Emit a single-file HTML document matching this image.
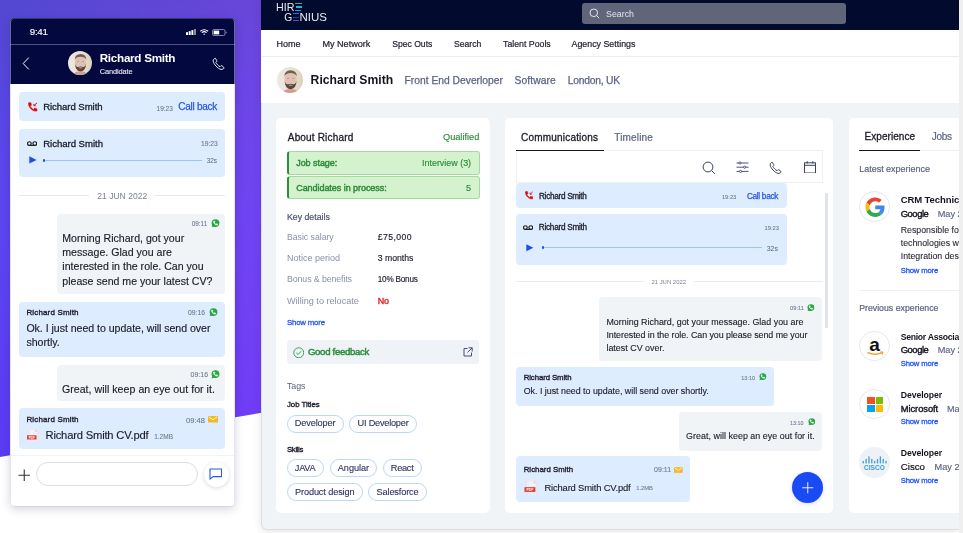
<!DOCTYPE html>
<html><head><meta charset="utf-8"><style>
html,body{margin:0;padding:0;}
body{width:963px;height:533px;position:relative;overflow:hidden;background:#fff;font-family:"Liberation Sans",sans-serif;}
.t{position:absolute;white-space:nowrap;}
.b{position:absolute;}
.av{border-radius:50%;overflow:hidden;background:radial-gradient(ellipse 38% 44% at 50% 50%, #c99a7e 0%, #b98a70 60%, transparent 62%),radial-gradient(ellipse 30% 20% at 50% 78%, #3a2a22 0%, #3a2a22 60%, transparent 64%),linear-gradient(180deg,#efe6dc,#e8dccd);}
</style></head><body>
<div class="b" style="left:0;top:0;width:963px;height:533px;background:linear-gradient(90deg,rgba(200,60,255,0) 0px,rgba(200,60,255,0.18) 250px,rgba(200,60,255,0.25) 963px),linear-gradient(180deg,#5248d0 0px,#5a47e6 120px,#5c46f0 215px,#5c3cf5 435px,#5c3af6 533px);clip-path:polygon(0 0,963px 0,963px 294px,0 457px);"></div>
<div class="b" style="left:10.00px;top:18.00px;width:224.60px;height:488.30px;background:#fff;border-radius:4px;box-shadow:0 3px 10px rgba(20,20,60,0.18);"></div>
<div class="b" style="left:10.00px;top:18.00px;width:224.60px;height:66.20px;background:#03083f;border-radius:4px 4px 0 0;"></div>
<div class="b" style="left:10.00px;top:44.20px;width:224.60px;height:1.00px;background:#4d5280;"></div>
<svg class="b" style="left:186.00px;top:29.00px;" width="10.00" height="6.00" viewBox="0 0 10.00 6.00"><rect x="0" y="3.2" width="2" height="2.8" fill="#fff"/><rect x="2.7" y="2.2" width="2" height="3.8" fill="#fff"/><rect x="5.4" y="1.1" width="2" height="4.9" fill="#fff"/><rect x="8.1" y="0" width="1.9" height="6" fill="#fff" opacity="0.55"/></svg>
<svg class="b" style="left:200.00px;top:29.00px;" width="8.50" height="6.20" viewBox="0 0 8.50 6.20"><path d="M0.3 2.2 Q4.2 -0.8 8.1 2.2" stroke="#fff" stroke-width="1.1" fill="none"/><path d="M1.8 3.6 Q4.2 1.7 6.6 3.6" stroke="#fff" stroke-width="1.1" fill="none"/><path d="M3.2 5 L4.2 6 L5.2 5 Q4.2 4.2 3.2 5Z" fill="#fff"/></svg>
<svg class="b" style="left:211.50px;top:28.50px;" width="15.50" height="7.00" viewBox="0 0 15.50 7.00"><rect x="0.5" y="0.5" width="12.5" height="6" rx="1.5" stroke="#8c8fb0" stroke-width="0.9" fill="none"/><rect x="1.6" y="1.6" width="5.6" height="3.8" fill="#fff"/><path d="M13.8 2.3 L15 3.5 L13.8 4.7Z" fill="#8c8fb0"/></svg>
<svg class="b" style="left:22.00px;top:57.00px;" width="9.00" height="13.00" viewBox="0 0 9.00 13.00"><path d="M6.8 0.6 L1.2 6.5 L6.8 12.4" stroke="#fff" stroke-width="1" fill="none"/></svg>
<svg class="b" style="left:68.30px;top:51.30px" width="24" height="24" viewBox="0 0 26 26"><defs><clipPath id="avc8"><circle cx="13" cy="13" r="13"/></clipPath><filter id="avf8" x="-10%" y="-10%" width="120%" height="120%"><feGaussianBlur stdDeviation="0.45"/></filter><linearGradient id="avg8" x1="0" y1="0" x2="1" y2="0"><stop offset="0" stop-color="#ede9e1"/><stop offset="0.6" stop-color="#e7e2d7"/><stop offset="1" stop-color="#dcd0b8"/></linearGradient></defs><g clip-path="url(#avc8)"><rect width="26" height="26" fill="url(#avg8)"/><g filter="url(#avf8)"><ellipse cx="13.6" cy="12.8" rx="6.2" ry="8.2" fill="#dfc2b2"/><path d="M7.3 9.5 Q7.5 3.6 13.6 3.3 Q19.7 3.6 19.9 9.5 Q18.5 6.2 13.6 6.1 Q8.7 6.2 7.3 9.5Z" fill="#6e5e52"/><path d="M7.6 13.5 Q7.9 21.8 13.6 22.4 Q19.3 21.8 19.6 13.5 Q18.8 17.6 16.2 17.2 Q13.6 16.4 11 17.2 Q8.4 17.6 7.6 13.5Z" fill="#5a4a42"/><ellipse cx="13.6" cy="18.2" rx="2" ry="0.75" fill="#c08878"/><path d="M10 11.4 H11.8 M15.4 11.4 H17.2" stroke="#9a7a6c" stroke-width="0.6"/><path d="M6 26 Q7 22.5 11 22.2 L16 22.2 Q20 22.5 21 26Z" fill="#d49d8f"/></g></g></svg>
<svg class="b" style="left:211.50px;top:56.50px;" width="13.50" height="13.50" viewBox="0 0 13.50 13.50"><path d="M3.2 1.2 C2.2 1.6 1 2.6 1.2 4.2 C1.6 7 5.6 11.6 9 12.4 C10.4 12.7 11.6 11.7 12.2 10.8 L10 8.8 C9.6 8.5 9.1 8.6 8.8 8.9 L8 9.7 C6.4 8.9 4.6 7 3.8 5.4 L4.6 4.6 C4.9 4.3 5 3.8 4.7 3.4 Z" stroke="#fff" stroke-width="0.9" fill="none" stroke-linejoin="round"/></svg>
<div class="b" style="left:19.40px;top:92.30px;width:205.60px;height:29.20px;background:#ddecfe;border-radius:4px;"></div>
<svg class="b" style="left:27.50px;top:102.00px;" width="10.00" height="10.00" viewBox="0 0 10.00 10.00"><g transform="translate(-0.9 -0.7) scale(0.4667)"><path fill="#e00b0b" stroke="#e00b0b" stroke-width="1.4" d="M6.62 10.79c1.44 2.83 3.76 5.14 6.59 6.59l2.2-2.2c.27-.27.67-.36 1.02-.24 1.12.37 2.33.57 3.57.57.55 0 1 .45 1 1V20c0 .55-.45 1-1 1-9.39 0-17-7.61-17-17 0-.55.45-1 1-1h3.5c.55 0 1 .45 1 1 0 1.25.2 2.45.57 3.57.11.35.03.74-.25 1.02l-2.2 2.2z"/></g><path d="M9 0.9 L6 3.6 M5.9 1.9 V3.7 H7.7" stroke="#e00b0b" stroke-width="1" fill="none"/></svg>
<div class="b" style="left:19.20px;top:129.10px;width:206.00px;height:47.60px;background:#ddecfe;border-radius:4px;"></div>
<svg class="b" style="left:27.00px;top:141.00px;" width="10.20" height="5.40" viewBox="0 0 10.20 5.40"><circle cx="2.4" cy="2.6" r="1.85" stroke="#222" stroke-width="1.2" fill="none"/><circle cx="7.8" cy="2.6" r="1.85" stroke="#222" stroke-width="1.2" fill="none"/><path d="M2.4 4.45 H7.8" stroke="#222" stroke-width="1.1"/></svg>
<svg class="b" style="left:28.50px;top:156.30px;" width="8.00" height="7.90" viewBox="0 0 8.00 7.90"><path d="M0.3 0.3 L7.6 3.95 L0.3 7.6Z" fill="#1d4fe8"/></svg>
<div class="b" style="left:43.00px;top:160.00px;width:158.90px;height:1.00px;background:#9cc2f6;"></div>
<div class="b" style="left:42.60px;top:159.20px;width:2.60px;height:2.60px;background:#1d4fe8;border-radius:50%;"></div>
<div class="b" style="left:19.20px;top:194.60px;width:70.30px;height:1.00px;background:#e6e9ee;"></div>
<div class="b" style="left:154.70px;top:194.60px;width:70.50px;height:1.00px;background:#e6e9ee;"></div>
<div class="b" style="left:57.20px;top:213.60px;width:167.80px;height:80.00px;background:#f0f4f7;border-radius:4px;"></div>
<svg class="b" style="left:211.30px;top:218.60px;" width="8.70" height="8.70" viewBox="0 0 8.70 8.70"><circle cx="4.5" cy="4.1" r="3.95" fill="#27a844"/><path d="M1.6 5.6 L0.5 8.5 L3.6 7.5Z" fill="#27a844"/><g transform="translate(1.75 1.35) scale(0.23)"><path fill="#fff" stroke="#fff" stroke-width="2.2" d="M6.62 10.79c1.44 2.83 3.76 5.14 6.59 6.59l2.2-2.2c.27-.27.67-.36 1.02-.24 1.12.37 2.33.57 3.57.57.55 0 1 .45 1 1V20c0 .55-.45 1-1 1-9.39 0-17-7.61-17-17 0-.55.45-1 1-1h3.5c.55 0 1 .45 1 1 0 1.25.2 2.45.57 3.57.11.35.03.74-.25 1.02l-2.2 2.2z"/></g></svg>
<div class="b" style="left:19.30px;top:301.50px;width:205.70px;height:55.40px;background:#ddecfe;border-radius:4px;"></div>
<svg class="b" style="left:209.00px;top:307.70px;" width="8.70" height="8.70" viewBox="0 0 8.70 8.70"><circle cx="4.5" cy="4.1" r="3.95" fill="#27a844"/><path d="M1.6 5.6 L0.5 8.5 L3.6 7.5Z" fill="#27a844"/><g transform="translate(1.75 1.35) scale(0.23)"><path fill="#fff" stroke="#fff" stroke-width="2.2" d="M6.62 10.79c1.44 2.83 3.76 5.14 6.59 6.59l2.2-2.2c.27-.27.67-.36 1.02-.24 1.12.37 2.33.57 3.57.57.55 0 1 .45 1 1V20c0 .55-.45 1-1 1-9.39 0-17-7.61-17-17 0-.55.45-1 1-1h3.5c.55 0 1 .45 1 1 0 1.25.2 2.45.57 3.57.11.35.03.74-.25 1.02l-2.2 2.2z"/></g></svg>
<div class="b" style="left:57.40px;top:364.60px;width:167.60px;height:36.00px;background:#f0f4f7;border-radius:4px;"></div>
<svg class="b" style="left:211.40px;top:370.10px;" width="8.70" height="8.70" viewBox="0 0 8.70 8.70"><circle cx="4.5" cy="4.1" r="3.95" fill="#27a844"/><path d="M1.6 5.6 L0.5 8.5 L3.6 7.5Z" fill="#27a844"/><g transform="translate(1.75 1.35) scale(0.23)"><path fill="#fff" stroke="#fff" stroke-width="2.2" d="M6.62 10.79c1.44 2.83 3.76 5.14 6.59 6.59l2.2-2.2c.27-.27.67-.36 1.02-.24 1.12.37 2.33.57 3.57.57.55 0 1 .45 1 1V20c0 .55-.45 1-1 1-9.39 0-17-7.61-17-17 0-.55.45-1 1-1h3.5c.55 0 1 .45 1 1 0 1.25.2 2.45.57 3.57.11.35.03.74-.25 1.02l-2.2 2.2z"/></g></svg>
<div class="b" style="left:19.30px;top:408.20px;width:205.70px;height:41.30px;background:#ddecfe;border-radius:4px;"></div>
<svg class="b" style="left:208.00px;top:416.40px;" width="10.00" height="6.50" viewBox="0 0 10.00 6.50"><rect x="0" y="0" width="10" height="6.5" fill="#f6b726"/><path d="M0.8 0.8 L5 3.8 L9.2 0.8" stroke="#fff" stroke-width="0.9" fill="none"/></svg>
<svg class="b" style="left:26.80px;top:428.50px;" width="12.40" height="12.40" viewBox="0 0 12.40 12.40"><path d="M1.5 0 H8 L11 3 V12.4 H1.5Z" fill="#f1f1f3" stroke="#d9d9de" stroke-width="0.5"/><path d="M8 0 V3 H11" fill="#dcdce2"/><rect x="0" y="6.3" width="9.6" height="4.2" fill="#e23b3b"/><text x="4.8" y="9.6" font-size="3" fill="#fff" text-anchor="middle" font-family="Liberation Sans" font-weight="700">PDF</text></svg>
<div class="b" style="left:10.00px;top:455.20px;width:224.60px;height:1.00px;background:#f1f3f6;"></div>
<svg class="b" style="left:17.50px;top:468.50px;" width="12.50" height="12.50" viewBox="0 0 12.50 12.50"><path d="M6.25 0.5 V12 M0.5 6.25 H12" stroke="#333" stroke-width="1.1"/></svg>
<div class="b" style="left:36.20px;top:462.40px;width:161.80px;height:24.00px;border:1px solid #d9dde8;border-radius:13px;box-sizing:border-box;background:#fff;"></div>
<div class="b" style="left:203.50px;top:462.00px;width:25.00px;height:25.00px;background:#fff;border-radius:50%;box-shadow:0 1px 4px rgba(0,0,0,0.15);"></div>
<svg class="b" style="left:208.80px;top:467.80px;" width="13.70" height="12.20" viewBox="0 0 13.70 12.20"><path d="M1 1 H12.6 V8.6 H4 L1 11.2 Z" stroke="#2456ec" stroke-width="1.1" fill="none" stroke-linejoin="round"/></svg>
<div class="b" style="left:9.60px;top:17.60px;width:225.40px;height:489.10px;border:1px solid rgba(205,205,225,0.5);border-top-color:rgba(205,205,225,0.25);border-radius:5px;box-sizing:border-box;"></div>
<div class="b" style="left:959.00px;top:0.00px;width:4.00px;height:533.00px;background:#efefef;"></div>
<div class="b" style="left:260.90px;top:0.00px;width:698.10px;height:529.50px;background:#f0f4f7;border-radius:0 0 0 6px;box-shadow:0 2px 10px rgba(0,0,0,0.10);border:1px solid rgba(0,10,40,0.09);border-top:none;border-right:none;box-sizing:border-box;"></div>
<div class="b" style="left:260.90px;top:0.00px;width:698.10px;height:30.00px;background:#020b2e;"></div>
<div class="b" style="left:295px;top:2.8px;width:7px;height:1.2px;background:#3aa7a8"></div>
<div class="b" style="left:295.6px;top:6.4px;width:6px;height:1.2px;background:#25b4d2"></div>
<div class="b" style="left:295px;top:9.9px;width:6px;height:1.2px;background:#2f8fd6"></div>
<div class="b" style="left:293px;top:13px;width:5.5px;height:1.2px;background:#2a70e6"></div>
<div class="b" style="left:293px;top:16.6px;width:5.5px;height:1.2px;background:#1f3fa8"></div>
<div class="b" style="left:293px;top:20px;width:5.5px;height:1.2px;background:#6d3ee6"></div>
<div class="b" style="left:581.80px;top:3.30px;width:264.00px;height:20.50px;background:#606579;border-radius:3px;"></div>
<svg class="b" style="left:589.00px;top:8.00px;" width="11.00" height="11.00" viewBox="0 0 11.00 11.00"><circle cx="4.8" cy="4.8" r="3.8" stroke="#e6e8f0" stroke-width="1" fill="none"/><path d="M7.6 7.6 L10.2 10.2" stroke="#e6e8f0" stroke-width="1"/></svg>
<div class="b" style="left:260.90px;top:30.00px;width:698.10px;height:73.00px;background:#fff;"></div>
<div class="b" style="left:261.50px;top:56.00px;width:697.50px;height:1.00px;background:#e9edf0;"></div>
<svg class="b" style="left:276.50px;top:66.50px" width="26" height="26" viewBox="0 0 26 26"><defs><clipPath id="avc47"><circle cx="13" cy="13" r="13"/></clipPath><filter id="avf47" x="-10%" y="-10%" width="120%" height="120%"><feGaussianBlur stdDeviation="0.45"/></filter><linearGradient id="avg47" x1="0" y1="0" x2="1" y2="0"><stop offset="0" stop-color="#ede9e1"/><stop offset="0.6" stop-color="#e7e2d7"/><stop offset="1" stop-color="#dcd0b8"/></linearGradient></defs><g clip-path="url(#avc47)"><rect width="26" height="26" fill="url(#avg47)"/><g filter="url(#avf47)"><ellipse cx="13.6" cy="12.8" rx="6.2" ry="8.2" fill="#dfc2b2"/><path d="M7.3 9.5 Q7.5 3.6 13.6 3.3 Q19.7 3.6 19.9 9.5 Q18.5 6.2 13.6 6.1 Q8.7 6.2 7.3 9.5Z" fill="#6e5e52"/><path d="M7.6 13.5 Q7.9 21.8 13.6 22.4 Q19.3 21.8 19.6 13.5 Q18.8 17.6 16.2 17.2 Q13.6 16.4 11 17.2 Q8.4 17.6 7.6 13.5Z" fill="#5a4a42"/><ellipse cx="13.6" cy="18.2" rx="2" ry="0.75" fill="#c08878"/><path d="M10 11.4 H11.8 M15.4 11.4 H17.2" stroke="#9a7a6c" stroke-width="0.6"/><path d="M6 26 Q7 22.5 11 22.2 L16 22.2 Q20 22.5 21 26Z" fill="#d49d8f"/></g></g></svg>
<div class="b" style="left:276.40px;top:118.40px;width:213.50px;height:395.10px;background:#fff;border-radius:5px;"></div>
<div class="b" style="left:286.80px;top:151.20px;width:193.00px;height:23.80px;background:#d4f2ce;border:1px solid #a6d9a0;border-left:2px solid #2a8e3b;border-radius:3px;box-sizing:border-box;"></div>
<div class="b" style="left:286.80px;top:175.90px;width:193.00px;height:23.60px;background:#d4f2ce;border:1px solid #a6d9a0;border-left:2px solid #2a8e3b;border-radius:3px;box-sizing:border-box;"></div>
<div class="b" style="left:287.00px;top:340.20px;width:191.90px;height:23.50px;background:#eff3f7;border-radius:3px;"></div>
<svg class="b" style="left:292.50px;top:346.50px;" width="11.50" height="11.50" viewBox="0 0 11.50 11.50"><circle cx="5.75" cy="5.75" r="5" stroke="#2b9a43" stroke-width="0.9" fill="none"/><path d="M3.3 5.9 L5 7.5 L8.2 4.2" stroke="#2b9a43" stroke-width="0.9" fill="none"/></svg>
<svg class="b" style="left:463.00px;top:347.00px;" width="10.00" height="10.00" viewBox="0 0 10.00 10.00"><path d="M4.5 1.5 H1 V9 H8.5 V5.5" stroke="#3a4066" stroke-width="0.9" fill="none"/><path d="M5.5 0.8 H9.2 V4.5 M9.2 0.8 L4.5 5.5" stroke="#3a4066" stroke-width="0.9" fill="none"/></svg>
<div class="b" style="left:286.50px;top:414.50px;width:57.40px;height:18.20px;border:1px solid #bcd6f8;border-radius:10px;box-sizing:border-box;background:#fff;"></div>
<div class="b" style="left:349.30px;top:414.50px;width:67.70px;height:18.20px;border:1px solid #bcd6f8;border-radius:10px;box-sizing:border-box;background:#fff;"></div>
<div class="b" style="left:286.50px;top:458.90px;width:37.50px;height:18.40px;border:1px solid #bcd6f8;border-radius:10px;box-sizing:border-box;background:#fff;"></div>
<div class="b" style="left:329.50px;top:458.90px;width:47.90px;height:18.40px;border:1px solid #bcd6f8;border-radius:10px;box-sizing:border-box;background:#fff;"></div>
<div class="b" style="left:382.50px;top:458.90px;width:39.50px;height:18.40px;border:1px solid #bcd6f8;border-radius:10px;box-sizing:border-box;background:#fff;"></div>
<div class="b" style="left:286.70px;top:482.80px;width:76.20px;height:18.60px;border:1px solid #bcd6f8;border-radius:10px;box-sizing:border-box;background:#fff;"></div>
<div class="b" style="left:368.30px;top:482.80px;width:58.60px;height:18.60px;border:1px solid #bcd6f8;border-radius:10px;box-sizing:border-box;background:#fff;"></div>
<div class="b" style="left:504.90px;top:118.40px;width:328.30px;height:395.10px;background:#fff;border-radius:5px;"></div>
<div class="b" style="left:515.80px;top:150.00px;width:307.00px;height:1.00px;background:#edf0f3;"></div>
<div class="b" style="left:515.60px;top:149.50px;width:88.00px;height:1.50px;background:#15151f;"></div>
<div class="b" style="left:515.80px;top:151.00px;width:307.00px;height:31.50px;border:1px solid #eef1f4;border-top:none;box-sizing:border-box;"></div>
<svg class="b" style="left:702.00px;top:160.50px;" width="14.00" height="14.00" viewBox="0 0 14.00 14.00"><circle cx="6" cy="6" r="4.9" stroke="#3a4066" stroke-width="1" fill="none"/><path d="M9.6 9.6 L12.8 12.8" stroke="#3a4066" stroke-width="1"/></svg>
<svg class="b" style="left:736.00px;top:161.00px;" width="13.00" height="12.50" viewBox="0 0 13.00 12.50"><path d="M0.5 2 H12.5 M0.5 6.2 H12.5 M0.5 10.4 H12.5" stroke="#3a4066" stroke-width="0.9"/><circle cx="4" cy="2" r="1.1" fill="#fff" stroke="#3a4066" stroke-width="0.8"/><circle cx="8.6" cy="6.2" r="1.1" fill="#fff" stroke="#3a4066" stroke-width="0.8"/><circle cx="4.5" cy="10.4" r="1.1" fill="#fff" stroke="#3a4066" stroke-width="0.8"/></svg>
<svg class="b" style="left:769.00px;top:161.00px;" width="14.00" height="14.00" viewBox="0 0 14.00 14.00"><path d="M3.2 1.2 C2.2 1.6 1 2.6 1.2 4.2 C1.6 7 5.6 11.6 9 12.4 C10.4 12.7 11.6 11.7 12.2 10.8 L10 8.8 C9.6 8.5 9.1 8.6 8.8 8.9 L8 9.7 C6.4 8.9 4.6 7 3.8 5.4 L4.6 4.6 C4.9 4.3 5 3.8 4.7 3.4 Z" stroke="#3a4066" stroke-width="1" fill="none" stroke-linejoin="round"/></svg>
<svg class="b" style="left:804.00px;top:160.50px;" width="12.00" height="12.50" viewBox="0 0 12.00 12.50"><rect x="0.5" y="1.8" width="11" height="10.2" stroke="#3a4066" stroke-width="1" fill="none"/><path d="M0.5 4.3 H11.5" stroke="#3a4066" stroke-width="1"/><path d="M3.2 0.2 V2.5 M8.8 0.2 V2.5" stroke="#3a4066" stroke-width="1"/></svg>
<div class="b" style="left:825.20px;top:193.00px;width:2.40px;height:135.40px;background:#dfe3ea;border-radius:1px;"></div>
<div class="b" style="left:515.80px;top:182.80px;width:271.10px;height:25.70px;background:#ddecfe;border-radius:4px;"></div>
<svg class="b" style="left:524.50px;top:191.20px;" width="8.70" height="8.70" viewBox="0 0 10 10"><g transform="translate(-0.9 -0.7) scale(0.4667)"><path fill="#e00b0b" stroke="#e00b0b" stroke-width="1.4" d="M6.62 10.79c1.44 2.83 3.76 5.14 6.59 6.59l2.2-2.2c.27-.27.67-.36 1.02-.24 1.12.37 2.33.57 3.57.57.55 0 1 .45 1 1V20c0 .55-.45 1-1 1-9.39 0-17-7.61-17-17 0-.55.45-1 1-1h3.5c.55 0 1 .45 1 1 0 1.25.2 2.45.57 3.57.11.35.03.74-.25 1.02l-2.2 2.2z"/></g><path d="M9 0.9 L6 3.6 M5.9 1.9 V3.7 H7.7" stroke="#e00b0b" stroke-width="1" fill="none"/></svg>
<div class="b" style="left:515.80px;top:214.00px;width:271.00px;height:51.40px;background:#ddecfe;border-radius:4px;"></div>
<svg class="b" style="left:523.20px;top:225.00px;" width="10.20" height="5.40" viewBox="0 0 10.20 5.40"><circle cx="2.4" cy="2.6" r="1.85" stroke="#222" stroke-width="1.2" fill="none"/><circle cx="7.8" cy="2.6" r="1.85" stroke="#222" stroke-width="1.2" fill="none"/><path d="M2.4 4.45 H7.8" stroke="#222" stroke-width="1.1"/></svg>
<svg class="b" style="left:526.40px;top:244.00px;" width="7.60" height="7.60" viewBox="0 0 7.60 7.60"><path d="M0.3 0.3 L7.3 3.8 L0.3 7.3Z" fill="#1d4fe8"/></svg>
<div class="b" style="left:544.00px;top:247.00px;width:217.50px;height:1.00px;background:#9cc2f6;"></div>
<div class="b" style="left:541.50px;top:246.20px;width:2.60px;height:2.60px;background:#1d4fe8;border-radius:50%;"></div>
<div class="b" style="left:515.80px;top:281.00px;width:127.80px;height:1.00px;background:#e8ebef;"></div>
<div class="b" style="left:694.40px;top:281.00px;width:128.40px;height:1.00px;background:#e8ebef;"></div>
<div class="b" style="left:598.60px;top:297.00px;width:223.20px;height:63.60px;background:#f0f4f7;border-radius:4px;"></div>
<svg class="b" style="left:807.20px;top:303.60px;" width="7.40" height="7.40" viewBox="0 0 8.6 8.6"><circle cx="4.5" cy="4.1" r="3.95" fill="#27a844"/><path d="M1.6 5.6 L0.5 8.5 L3.6 7.5Z" fill="#27a844"/><g transform="translate(1.75 1.35) scale(0.23)"><path fill="#fff" stroke="#fff" stroke-width="2.2" d="M6.62 10.79c1.44 2.83 3.76 5.14 6.59 6.59l2.2-2.2c.27-.27.67-.36 1.02-.24 1.12.37 2.33.57 3.57.57.55 0 1 .45 1 1V20c0 .55-.45 1-1 1-9.39 0-17-7.61-17-17 0-.55.45-1 1-1h3.5c.55 0 1 .45 1 1 0 1.25.2 2.45.57 3.57.11.35.03.74-.25 1.02l-2.2 2.2z"/></g></svg>
<div class="b" style="left:515.80px;top:366.90px;width:258.00px;height:38.70px;background:#ddecfe;border-radius:4px;"></div>
<svg class="b" style="left:759.30px;top:373.30px;" width="7.40" height="7.40" viewBox="0 0 8.6 8.6"><circle cx="4.5" cy="4.1" r="3.95" fill="#27a844"/><path d="M1.6 5.6 L0.5 8.5 L3.6 7.5Z" fill="#27a844"/><g transform="translate(1.75 1.35) scale(0.23)"><path fill="#fff" stroke="#fff" stroke-width="2.2" d="M6.62 10.79c1.44 2.83 3.76 5.14 6.59 6.59l2.2-2.2c.27-.27.67-.36 1.02-.24 1.12.37 2.33.57 3.57.57.55 0 1 .45 1 1V20c0 .55-.45 1-1 1-9.39 0-17-7.61-17-17 0-.55.45-1 1-1h3.5c.55 0 1 .45 1 1 0 1.25.2 2.45.57 3.57.11.35.03.74-.25 1.02l-2.2 2.2z"/></g></svg>
<div class="b" style="left:678.60px;top:411.80px;width:143.40px;height:39.00px;background:#f0f4f7;border-radius:4px;"></div>
<svg class="b" style="left:807.50px;top:418.00px;" width="7.40" height="7.40" viewBox="0 0 8.6 8.6"><circle cx="4.5" cy="4.1" r="3.95" fill="#27a844"/><path d="M1.6 5.6 L0.5 8.5 L3.6 7.5Z" fill="#27a844"/><g transform="translate(1.75 1.35) scale(0.23)"><path fill="#fff" stroke="#fff" stroke-width="2.2" d="M6.62 10.79c1.44 2.83 3.76 5.14 6.59 6.59l2.2-2.2c.27-.27.67-.36 1.02-.24 1.12.37 2.33.57 3.57.57.55 0 1 .45 1 1V20c0 .55-.45 1-1 1-9.39 0-17-7.61-17-17 0-.55.45-1 1-1h3.5c.55 0 1 .45 1 1 0 1.25.2 2.45.57 3.57.11.35.03.74-.25 1.02l-2.2 2.2z"/></g></svg>
<div class="b" style="left:515.80px;top:456.40px;width:174.00px;height:45.90px;background:#ddecfe;border-radius:4px;"></div>
<svg class="b" style="left:674.30px;top:466.60px;" width="8.70" height="6.00" viewBox="0 0 10 6.5"><rect x="0" y="0" width="10" height="6.5" fill="#f6b726"/><path d="M0.8 0.8 L5 3.8 L9.2 0.8" stroke="#fff" stroke-width="0.9" fill="none"/></svg>
<svg class="b" style="left:524.10px;top:480.10px;" width="13.50" height="14.10" viewBox="0 0 11 12.4"><path d="M1.5 0 H8 L11 3 V12.4 H1.5Z" fill="#f1f1f3" stroke="#d9d9de" stroke-width="0.5"/><path d="M8 0 V3 H11" fill="#dcdce2"/><rect x="0" y="6.3" width="9.6" height="4.2" fill="#e23b3b"/><text x="4.8" y="9.6" font-size="3" fill="#fff" text-anchor="middle" font-family="Liberation Sans" font-weight="700">PDF</text></svg>
<div class="b" style="left:791.70px;top:471.80px;width:31.10px;height:31.10px;background:#1a4af2;border-radius:50%;box-shadow:0 1px 4px rgba(20,60,200,0.18);"></div>
<svg class="b" style="left:799.50px;top:479.60px;" width="15.50" height="15.50" viewBox="0 0 15.50 15.50"><path d="M7.75 2.2 V13.3 M2.2 7.75 H13.3" stroke="#e8eeff" stroke-width="1"/></svg>
<div class="b" style="left:848.80px;top:118.40px;width:126.20px;height:394.80px;background:#fff;border-radius:5px;"></div>
<div class="b" style="left:858.90px;top:150.20px;width:100.10px;height:1.00px;background:#edf0f3;"></div>
<div class="b" style="left:858.90px;top:149.70px;width:61.60px;height:1.50px;background:#15151f;"></div>
<div class="b" style="left:859.4px;top:191.30px;width:30.4px;height:30.4px;border-radius:50%;background:#fff;border:1px solid #e6e8ec;box-sizing:border-box;overflow:hidden"><svg width="30.4" height="30.4" viewBox="0 0 48 48" style="position:absolute;left:0;top:0"><g transform="translate(8.6 8.6) scale(0.642)"><path fill="#EA4335" d="M24 9.5c3.54 0 6.71 1.22 9.21 3.6l6.85-6.85C35.9 2.38 30.47 0 24 0 14.62 0 6.51 5.38 2.56 13.22l7.98 6.19C12.43 13.72 17.74 9.5 24 9.5z"/><path fill="#4285F4" d="M46.98 24.55c0-1.57-.15-3.09-.38-4.55H24v9.02h12.94c-.58 2.96-2.26 5.48-4.78 7.18l7.73 6c4.51-4.18 7.09-10.36 7.09-17.65z"/><path fill="#FBBC05" d="M10.53 28.59c-.48-1.45-.76-2.99-.76-4.59s.27-3.14.76-4.59l-7.98-6.19C.92 16.46 0 20.12 0 24c0 3.88.92 7.54 2.56 10.78l7.97-6.19z"/><path fill="#34A853" d="M24 48c6.48 0 11.93-2.13 15.89-5.81l-7.73-6c-2.15 1.45-4.92 2.3-8.16 2.3-6.26 0-11.57-4.22-13.47-9.91l-7.98 6.19C6.51 42.62 14.62 48 24 48z"/></g></svg></div>
<div class="b" style="left:859.00px;top:290.00px;width:100.00px;height:1.00px;background:#edf0f3;"></div>
<div class="b" style="left:859.4px;top:330.50px;width:30.4px;height:30.4px;border-radius:50%;background:#fff;border:1px solid #e6e8ec;box-sizing:border-box;overflow:hidden"><div style="position:absolute;left:0;top:0;width:100%;text-align:center;font:700 19px/26px 'Liberation Sans',sans-serif;color:#111">a</div><svg width="30" height="30" style="position:absolute;left:0;top:0"><path d="M7.5 20.5 Q15 24 22.5 20.5" stroke="#f3a53a" stroke-width="1.6" fill="none"/><path d="M20.6 19.6 L22.8 20.4 L22.2 22.6" stroke="#f3a53a" stroke-width="1.2" fill="none"/></svg></div>
<div class="b" style="left:859.4px;top:388.90px;width:30.4px;height:30.4px;border-radius:50%;background:#fff;border:1px solid #e6e8ec;box-sizing:border-box;overflow:hidden"><div style="position:absolute;left:6.9px;top:6.9px;width:7.4px;height:7.4px;background:#f25022"></div><div style="position:absolute;left:15.2px;top:6.9px;width:7.4px;height:7.4px;background:#7fba00"></div><div style="position:absolute;left:6.9px;top:15.2px;width:7.4px;height:7.4px;background:#00a4ef"></div><div style="position:absolute;left:15.2px;top:15.2px;width:7.4px;height:7.4px;background:#ffb900"></div></div>
<div class="b" style="left:859.4px;top:447.20px;width:30.4px;height:30.4px;border-radius:50%;background:#eef1f5;border:none;box-sizing:border-box;overflow:hidden"><svg width="30.4" height="30.4" style="position:absolute;left:0;top:0"><rect x="3.60" y="13.90" width="1.3" height="2.50" fill="#3d9fd6"/><rect x="6.45" y="11.90" width="1.3" height="4.50" fill="#3d9fd6"/><rect x="9.30" y="9.40" width="1.3" height="7.00" fill="#3d9fd6"/><rect x="12.15" y="11.90" width="1.3" height="4.50" fill="#3d9fd6"/><rect x="15.00" y="13.90" width="1.3" height="2.50" fill="#3d9fd6"/><rect x="17.85" y="11.90" width="1.3" height="4.50" fill="#3d9fd6"/><rect x="20.70" y="9.40" width="1.3" height="7.00" fill="#3d9fd6"/><rect x="23.55" y="11.90" width="1.3" height="4.50" fill="#3d9fd6"/><rect x="26.40" y="13.90" width="1.3" height="2.50" fill="#3d9fd6"/><text x="15.2" y="22.6" font-size="6.6" font-weight="700" fill="#3d9fd6" text-anchor="middle" font-family="Liberation Sans" textLength="21" lengthAdjust="spacingAndGlyphs">CISCO</text></svg></div>
<div class="b" style="left:959.00px;top:0.00px;width:4.00px;height:533.00px;background:#efefef;"></div>
<svg class="b" style="left:0;top:0;will-change:transform" width="963" height="533" font-family="Liberation Sans, sans-serif"><defs><clipPath id="c3"><rect x="0" y="0" width="959" height="533"/></clipPath></defs>
<text x="29.70" y="35.20" font-size="9.80" fill="#f2f2f7" font-weight="400" stroke="#f2f2f7" stroke-width="0.2" textLength="18.30" lengthAdjust="spacing">9:41</text>
<text x="99.70" y="61.80" font-size="11.70" fill="#ffffff" font-weight="700" textLength="75.80" lengthAdjust="spacing">Richard Smith</text>
<text x="99.70" y="74.30" font-size="7.40" fill="#e2e4ee" font-weight="400" stroke="#e2e4ee" stroke-width="0.12" textLength="33.00" lengthAdjust="spacing">Candidate</text>
<text x="43.20" y="110.40" font-size="9.60" fill="#1c1c28" font-weight="400" stroke="#1c1c28" stroke-width="0.3" textLength="59.40" lengthAdjust="spacing">Richard Smith</text>
<text x="156.60" y="111.00" font-size="6.47" fill="#6f7592" font-weight="400" stroke="#6f7592" stroke-width="0.08">19:23</text>
<text x="178.20" y="110.20" font-size="10.00" fill="#2456ec" font-weight="400" stroke="#2456ec" stroke-width="0.25" textLength="39.10" lengthAdjust="spacing">Call back</text>
<text x="43.20" y="146.50" font-size="9.60" fill="#1c1c28" font-weight="400" stroke="#1c1c28" stroke-width="0.3" textLength="59.80" lengthAdjust="spacing">Richard Smith</text>
<text x="200.90" y="146.20" font-size="6.75" fill="#6f7592" font-weight="400" stroke="#6f7592" stroke-width="0.08">19:23</text>
<text x="206.70" y="163.30" font-size="6.45" fill="#5c6384" font-weight="400">32s</text>
<text x="97.30" y="198.60" font-size="8.55" fill="#7a809c" font-weight="400">21 JUN 2022</text>
<text x="191.70" y="226.00" font-size="6.42" fill="#6f7592" font-weight="400" stroke="#6f7592" stroke-width="0.08">09:11</text>
<text x="62.30" y="242.30" font-size="10.60" fill="#1c1c28" font-weight="400" stroke="#1c1c28" stroke-width="0.15">Morning Richard, got your</text>
<text x="62.30" y="255.90" font-size="10.60" fill="#1c1c28" font-weight="400" stroke="#1c1c28" stroke-width="0.15">message. Glad you are</text>
<text x="62.30" y="270.40" font-size="10.60" fill="#1c1c28" font-weight="400" stroke="#1c1c28" stroke-width="0.15">interested in the role. Can you</text>
<text x="62.30" y="284.90" font-size="10.60" fill="#1c1c28" font-weight="400" stroke="#1c1c28" stroke-width="0.15">please send me your latest CV?</text>
<text x="26.40" y="315.30" font-size="8.00" fill="#1c1c28" font-weight="400" stroke="#1c1c28" stroke-width="0.35" textLength="52.10" lengthAdjust="spacing">Richard Smith</text>
<text x="188.00" y="315.00" font-size="6.79" fill="#6f7592" font-weight="400" stroke="#6f7592" stroke-width="0.08">09:16</text>
<text x="26.40" y="332.40" font-size="10.60" fill="#1c1c28" font-weight="400" stroke="#1c1c28" stroke-width="0.15" textLength="184.10" lengthAdjust="spacing">Ok. I just need to update, will send over</text>
<text x="26.40" y="345.90" font-size="10.60" fill="#1c1c28" font-weight="400" stroke="#1c1c28" stroke-width="0.15">shortly.</text>
<text x="190.60" y="377.40" font-size="6.99" fill="#6f7592" font-weight="400" stroke="#6f7592" stroke-width="0.08">09:16</text>
<text x="61.90" y="392.70" font-size="10.60" fill="#1c1c28" font-weight="400" stroke="#1c1c28" stroke-width="0.15" textLength="153.00" lengthAdjust="spacing">Great, will keep an eye out for it.</text>
<text x="26.40" y="422.20" font-size="8.00" fill="#1c1c28" font-weight="400" stroke="#1c1c28" stroke-width="0.35" textLength="52.10" lengthAdjust="spacing">Richard Smith</text>
<text x="186.00" y="423.00" font-size="7.59" fill="#6f7592" font-weight="400" stroke="#6f7592" stroke-width="0.08">09:48</text>
<text x="45.50" y="439.30" font-size="11.20" fill="#1c1c28" font-weight="400" stroke="#1c1c28" stroke-width="0.15" textLength="103.10" lengthAdjust="spacing">Richard Smith CV.pdf</text>
<text x="154.20" y="438.60" font-size="6.50" fill="#6f7592" font-weight="400" stroke="#6f7592" stroke-width="0.08">1.2MB</text>
<text x="276.00" y="11.00" font-size="10.74" fill="#e8e9f0" font-weight="400">HIR</text>
<text x="284.20" y="20.80" font-size="10.29" fill="#e8e9f0" font-weight="400">G</text>
<text x="299.50" y="20.80" font-size="11.51" fill="#e8e9f0" font-weight="400">NIUS</text>
<text x="606.00" y="16.80" font-size="8.84" fill="#e3e5ee" font-weight="400">Search</text>
<text x="276.50" y="47.20" font-size="9.00" fill="#1e1e2c" font-weight="400" stroke="#1e1e2c" stroke-width="0.2">Home</text>
<text x="322.40" y="47.20" font-size="9.11" fill="#1e1e2c" font-weight="400" stroke="#1e1e2c" stroke-width="0.2">My Network</text>
<text x="392.20" y="47.20" font-size="8.61" fill="#1e1e2c" font-weight="400" stroke="#1e1e2c" stroke-width="0.2">Spec Outs</text>
<text x="454.00" y="47.20" font-size="8.65" fill="#1e1e2c" font-weight="400" stroke="#1e1e2c" stroke-width="0.2">Search</text>
<text x="503.00" y="47.20" font-size="8.77" fill="#1e1e2c" font-weight="400" stroke="#1e1e2c" stroke-width="0.2">Talent Pools</text>
<text x="571.50" y="47.20" font-size="8.86" fill="#1e1e2c" font-weight="400" stroke="#1e1e2c" stroke-width="0.2">Agency Settings</text>
<text x="310.60" y="84.20" font-size="12.20" fill="#14141f" font-weight="700">Richard Smith</text>
<text x="404.50" y="84.40" font-size="10.30" fill="#5c6384" font-weight="400" stroke="#5c6384" stroke-width="0.25">Front End Deverloper</text>
<text x="514.60" y="84.40" font-size="10.30" fill="#5c6384" font-weight="400" stroke="#5c6384" stroke-width="0.25" textLength="41.10" lengthAdjust="spacing">Software</text>
<text x="567.70" y="84.40" font-size="10.30" fill="#5c6384" font-weight="400" stroke="#5c6384" stroke-width="0.25" textLength="52.30" lengthAdjust="spacing">London, UK</text>
<text x="287.80" y="140.50" font-size="10.00" fill="#1c1c28" font-weight="400" stroke="#1c1c28" stroke-width="0.3" textLength="65.40" lengthAdjust="spacing">About Richard</text>
<text x="443.00" y="140.20" font-size="9.20" fill="#2b8c3a" font-weight="400" stroke="#2b8c3a" stroke-width="0.15">Qualified</text>
<text x="296.20" y="165.80" font-size="9.00" fill="#2b8c3a" font-weight="400" stroke="#2b8c3a" stroke-width="0.45" textLength="41.10" lengthAdjust="spacing">Job stage:</text>
<text x="422.00" y="165.80" font-size="8.94" fill="#2b8c3a" font-weight="400" stroke="#2b8c3a" stroke-width="0.15">Interview (3)</text>
<text x="296.20" y="190.50" font-size="9.00" fill="#2b8c3a" font-weight="400" stroke="#2b8c3a" stroke-width="0.45" textLength="90.50" lengthAdjust="spacing">Candidates in process:</text>
<text x="466.08" y="190.50" font-size="9.20" fill="#2b8c3a" font-weight="400" stroke="#2b8c3a" stroke-width="0.15">5</text>
<text x="287.00" y="219.50" font-size="8.75" fill="#4b5173" font-weight="400" stroke="#4b5173" stroke-width="0.2">Key details</text>
<text x="287.00" y="239.60" font-size="8.66" fill="#8a90a8" font-weight="400">Basic salary</text>
<text x="377.80" y="239.60" font-size="8.70" fill="#1c1c28" font-weight="400" stroke="#1c1c28" stroke-width="0.15" textLength="33.80" lengthAdjust="spacing">£75,000</text>
<text x="287.00" y="260.90" font-size="9.00" fill="#8a90a8" font-weight="400">Notice period</text>
<text x="377.80" y="260.90" font-size="8.70" fill="#1c1c28" font-weight="400" stroke="#1c1c28" stroke-width="0.15" textLength="35.60" lengthAdjust="spacing">3 months</text>
<text x="287.00" y="282.20" font-size="8.80" fill="#8a90a8" font-weight="400" textLength="65.00" lengthAdjust="spacing">Bonus &amp; benefits</text>
<text x="377.80" y="282.20" font-size="8.20" fill="#1c1c28" font-weight="400" stroke="#1c1c28" stroke-width="0.15" textLength="40.00" lengthAdjust="spacing">10% Bonus</text>
<text x="287.00" y="303.50" font-size="9.12" fill="#8a90a8" font-weight="400">Willing to relocate</text>
<text x="377.80" y="303.50" font-size="9.00" fill="#e02a2a" font-weight="400" stroke="#e02a2a" stroke-width="0.4" textLength="11.30" lengthAdjust="spacing">No</text>
<text x="287.00" y="324.90" font-size="7.80" fill="#2456ec" font-weight="400" stroke="#2456ec" stroke-width="0.3" textLength="38.00" lengthAdjust="spacing">Show more</text>
<text x="307.90" y="355.40" font-size="9.60" fill="#2b8c3a" font-weight="400" stroke="#2b8c3a" stroke-width="0.45" textLength="61.50" lengthAdjust="spacing">Good feedback</text>
<text x="287.00" y="389.20" font-size="8.76" fill="#5a607c" font-weight="400">Tags</text>
<text x="287.00" y="407.00" font-size="7.80" fill="#1c1c28" font-weight="400" stroke="#1c1c28" stroke-width="0.35" textLength="32.70" lengthAdjust="spacing">Job Titles</text>
<text x="294.80" y="426.40" font-size="9.20" fill="#2b3062" font-weight="400" stroke="#2b3062" stroke-width="0.1" textLength="40.80" lengthAdjust="spacing">Developer</text>
<text x="357.60" y="426.40" font-size="9.20" fill="#2b3062" font-weight="400" stroke="#2b3062" stroke-width="0.1" textLength="51.10" lengthAdjust="spacing">UI Developer</text>
<text x="287.00" y="451.90" font-size="7.80" fill="#1c1c28" font-weight="400" stroke="#1c1c28" stroke-width="0.35" textLength="16.40" lengthAdjust="spacing">Skills</text>
<text x="294.80" y="470.90" font-size="9.20" fill="#2b3062" font-weight="400" stroke="#2b3062" stroke-width="0.1" textLength="20.90" lengthAdjust="spacing">JAVA</text>
<text x="337.80" y="470.90" font-size="9.20" fill="#2b3062" font-weight="400" stroke="#2b3062" stroke-width="0.1" textLength="31.30" lengthAdjust="spacing">Angular</text>
<text x="390.80" y="470.90" font-size="9.20" fill="#2b3062" font-weight="400" stroke="#2b3062" stroke-width="0.1" textLength="22.90" lengthAdjust="spacing">React</text>
<text x="295.00" y="494.90" font-size="9.20" fill="#2b3062" font-weight="400" stroke="#2b3062" stroke-width="0.1" textLength="59.60" lengthAdjust="spacing">Product design</text>
<text x="376.60" y="494.90" font-size="9.20" fill="#2b3062" font-weight="400" stroke="#2b3062" stroke-width="0.1" textLength="42.00" lengthAdjust="spacing">Salesforce</text>
<text x="521.10" y="140.70" font-size="10.00" fill="#1c1c28" font-weight="400" stroke="#1c1c28" stroke-width="0.3" textLength="76.90" lengthAdjust="spacing">Communications</text>
<text x="614.30" y="140.70" font-size="10.00" fill="#5c6384" font-weight="400" stroke="#5c6384" stroke-width="0.2" textLength="38.50" lengthAdjust="spacing">Timeline</text>
<text x="539.00" y="198.60" font-size="8.20" fill="#1c1c28" font-weight="400" stroke="#1c1c28" stroke-width="0.3" textLength="47.90" lengthAdjust="spacing">Richard Smith</text>
<text x="721.90" y="198.60" font-size="5.75" fill="#6f7592" font-weight="400" stroke="#6f7592" stroke-width="0.08">19:23</text>
<text x="746.90" y="199.00" font-size="8.20" fill="#2456ec" font-weight="400" stroke="#2456ec" stroke-width="0.25" textLength="31.40" lengthAdjust="spacing">Call back</text>
<text x="538.80" y="230.00" font-size="8.20" fill="#1c1c28" font-weight="400" stroke="#1c1c28" stroke-width="0.3" textLength="48.30" lengthAdjust="spacing">Richard Smith</text>
<text x="764.60" y="229.60" font-size="5.75" fill="#6f7592" font-weight="400" stroke="#6f7592" stroke-width="0.08">19:23</text>
<text x="766.70" y="250.50" font-size="7.01" fill="#5c6384" font-weight="400">32s</text>
<text x="651.40" y="284.00" font-size="5.94" fill="#7a809c" font-weight="400">21 JUN 2022</text>
<text x="790.00" y="309.60" font-size="5.77" fill="#6f7592" font-weight="400" stroke="#6f7592" stroke-width="0.08">09:11</text>
<text x="606.40" y="324.50" font-size="8.90" fill="#1c1c28" font-weight="400" stroke="#1c1c28" stroke-width="0.12" textLength="197.00" lengthAdjust="spacing">Morning Richard, got your message. Glad you are</text>
<text x="606.40" y="338.00" font-size="8.90" fill="#1c1c28" font-weight="400" stroke="#1c1c28" stroke-width="0.12" textLength="201.00" lengthAdjust="spacing">Interested in the role. Can you please send me your</text>
<text x="606.40" y="350.60" font-size="8.90" fill="#1c1c28" font-weight="400" stroke="#1c1c28" stroke-width="0.12" textLength="58.00" lengthAdjust="spacing">latest CV over.</text>
<text x="523.70" y="380.10" font-size="7.80" fill="#1c1c28" font-weight="400" stroke="#1c1c28" stroke-width="0.35" textLength="47.80" lengthAdjust="spacing">Richard Smith</text>
<text x="741.30" y="380.00" font-size="5.47" fill="#6f7592" font-weight="400" stroke="#6f7592" stroke-width="0.08">13:10</text>
<text x="523.70" y="394.30" font-size="8.90" fill="#1c1c28" font-weight="400" stroke="#1c1c28" stroke-width="0.12" textLength="185.00" lengthAdjust="spacing">Ok. I just need to update, will send over shortly.</text>
<text x="790.00" y="424.60" font-size="5.35" fill="#6f7592" font-weight="400" stroke="#6f7592" stroke-width="0.08">13:10</text>
<text x="686.10" y="438.90" font-size="8.90" fill="#1c1c28" font-weight="400" stroke="#1c1c28" stroke-width="0.12" textLength="128.50" lengthAdjust="spacing">Great, will keep an eye out for it.</text>
<text x="523.70" y="472.20" font-size="7.80" fill="#1c1c28" font-weight="400" stroke="#1c1c28" stroke-width="0.35" textLength="49.40" lengthAdjust="spacing">Richard Smith</text>
<text x="654.10" y="472.40" font-size="7.00" fill="#6f7592" font-weight="400" stroke="#6f7592" stroke-width="0.08">09:11</text>
<text x="544.50" y="490.50" font-size="9.40" fill="#1c1c28" font-weight="400" stroke="#1c1c28" stroke-width="0.12" textLength="86.10" lengthAdjust="spacing">Richard Smith CV.pdf</text>
<text x="636.30" y="489.80" font-size="5.74" fill="#6f7592" font-weight="400" stroke="#6f7592" stroke-width="0.08">1.2MB</text>
<text x="864.60" y="140.40" font-size="10.00" fill="#1c1c28" font-weight="400" stroke="#1c1c28" stroke-width="0.3" textLength="50.40" lengthAdjust="spacing">Experience</text>
<text x="931.70" y="140.40" font-size="10.00" fill="#5c6384" font-weight="400" stroke="#5c6384" stroke-width="0.2" textLength="20.30" lengthAdjust="spacing">Jobs</text>
<text x="859.20" y="171.60" font-size="8.97" fill="#5c6384" font-weight="400" stroke="#5c6384" stroke-width="0.2">Latest experience</text>
<text x="900.70" y="202.90" font-size="9.50" fill="#14141f" font-weight="700" textLength="66.29" lengthAdjust="spacing" clip-path="url(#c3)">CRM Technical</text>
<text x="900.70" y="216.60" font-size="9.40" fill="#14141f" font-weight="400" stroke="#14141f" stroke-width="0.4" textLength="28.10" lengthAdjust="spacing">Google</text>
<text x="937.70" y="216.60" font-size="9.20" fill="#5c6384" font-weight="400" stroke="#5c6384" stroke-width="0.15" clip-path="url(#c3)">May 2020 - Present</text>
<text x="900.70" y="232.90" font-size="8.80" fill="#2a2a36" font-weight="400" stroke="#2a2a36" stroke-width="0.1" clip-path="url(#c3)">Responsible for CRM</text>
<text x="900.70" y="245.70" font-size="8.80" fill="#2a2a36" font-weight="400" stroke="#2a2a36" stroke-width="0.1" clip-path="url(#c3)">technologies with</text>
<text x="900.70" y="258.50" font-size="8.80" fill="#2a2a36" font-weight="400" stroke="#2a2a36" stroke-width="0.1" clip-path="url(#c3)">Integration design</text>
<text x="900.70" y="272.90" font-size="7.70" fill="#2456ec" font-weight="400" stroke="#2456ec" stroke-width="0.3" textLength="37.50" lengthAdjust="spacing">Show more</text>
<text x="859.20" y="310.60" font-size="8.76" fill="#5c6384" font-weight="400" stroke="#5c6384" stroke-width="0.2">Previous experience</text>
<text x="900.70" y="339.70" font-size="8.70" fill="#14141f" font-weight="700" textLength="65.74" lengthAdjust="spacing" clip-path="url(#c3)">Senior Associate</text>
<text x="900.70" y="353.20" font-size="9.40" fill="#14141f" font-weight="400" stroke="#14141f" stroke-width="0.4" textLength="28.10" lengthAdjust="spacing">Google</text>
<text x="937.70" y="353.20" font-size="9.20" fill="#5c6384" font-weight="400" stroke="#5c6384" stroke-width="0.15" clip-path="url(#c3)">May 2020</text>
<text x="900.70" y="366.00" font-size="7.70" fill="#2456ec" font-weight="400" stroke="#2456ec" stroke-width="0.3" textLength="37.50" lengthAdjust="spacing">Show more</text>
<text x="900.70" y="397.80" font-size="8.70" fill="#14141f" font-weight="700" textLength="41.50" lengthAdjust="spacing">Developer</text>
<text x="900.70" y="411.50" font-size="9.30" fill="#14141f" font-weight="400" stroke="#14141f" stroke-width="0.4" textLength="37.50" lengthAdjust="spacing">Microsoft</text>
<text x="946.90" y="411.50" font-size="9.20" fill="#5c6384" font-weight="400" stroke="#5c6384" stroke-width="0.15" clip-path="url(#c3)">May 2020</text>
<text x="900.70" y="424.40" font-size="7.70" fill="#2456ec" font-weight="400" stroke="#2456ec" stroke-width="0.3" textLength="37.50" lengthAdjust="spacing">Show more</text>
<text x="900.70" y="456.00" font-size="8.70" fill="#14141f" font-weight="700" textLength="41.50" lengthAdjust="spacing">Developer</text>
<text x="900.70" y="469.80" font-size="9.70" fill="#14141f" font-weight="400" stroke="#14141f" stroke-width="0.2" textLength="24.30" lengthAdjust="spacing">Cisco</text>
<text x="934.60" y="469.80" font-size="9.20" fill="#5c6384" font-weight="400" stroke="#5c6384" stroke-width="0.15" clip-path="url(#c3)">May 2020</text>
<text x="900.70" y="482.70" font-size="7.70" fill="#2456ec" font-weight="400" stroke="#2456ec" stroke-width="0.3" textLength="37.50" lengthAdjust="spacing">Show more</text>
</svg>
</body></html>
